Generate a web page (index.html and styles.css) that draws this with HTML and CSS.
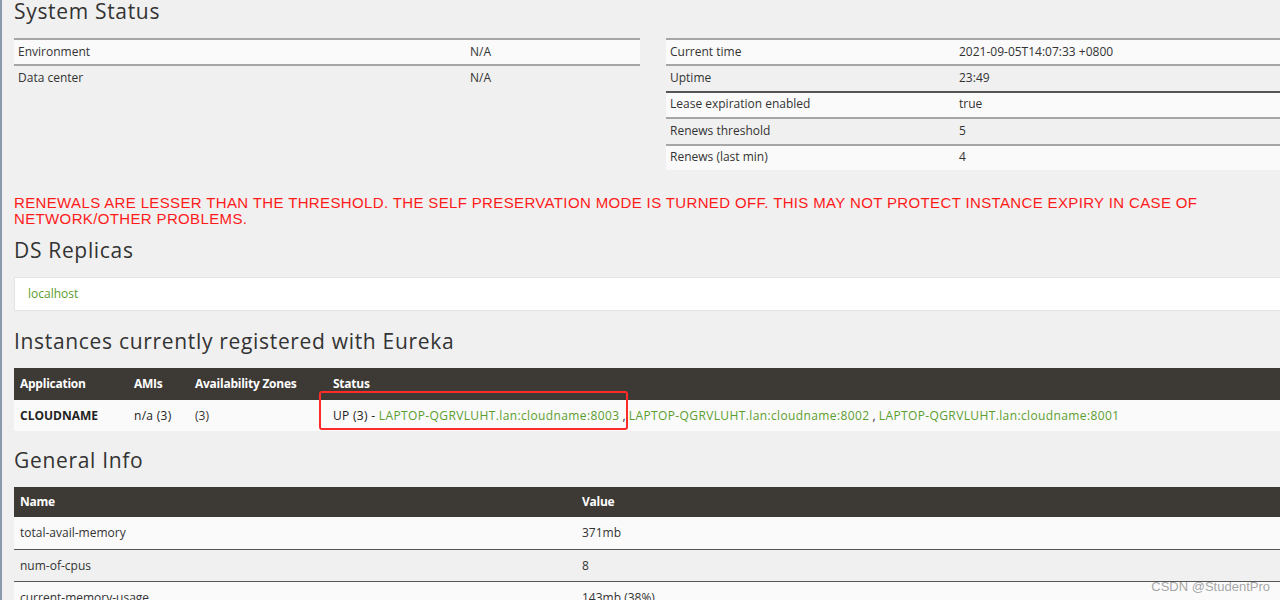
FILE: index.html
```html
<!DOCTYPE html>
<html>
<head>
<meta charset="utf-8">
<link rel="stylesheet" href="styles.css">
</head>
<body>
<div class="page">
  <h2 class="h first">System Status</h2>
  <div class="status-row">
    <table class="kv kv-left">
      <tr class="odd"><td class="k">Environment</td><td>N/A</td></tr>
      <tr class="even"><td class="k">Data center</td><td>N/A</td></tr>
    </table>
    <table class="kv kv-right">
      <tr class="odd"><td class="k">Current time</td><td>2021-09-05T14:07:33 +0800</td></tr>
      <tr class="even"><td class="k">Uptime</td><td>23:49</td></tr>
      <tr class="odd dark"><td class="k">Lease expiration enabled</td><td>true</td></tr>
      <tr class="even"><td class="k">Renews threshold</td><td>5</td></tr>
      <tr class="odd"><td class="k">Renews (last min)</td><td>4</td></tr>
    </table>
  </div>
  <p class="warn">RENEWALS ARE LESSER THAN THE THRESHOLD. THE SELF PRESERVATION MODE IS TURNED OFF. THIS MAY NOT PROTECT INSTANCE EXPIRY IN CASE OF NETWORK/OTHER PROBLEMS.</p>
  <h2 class="h h-ds">DS Replicas</h2>
  <div class="replicas"><a class="lnk">localhost</a></div>
  <h2 class="h h-inst">Instances currently registered with Eureka</h2>
  <div class="inst-wrap">
    <table class="grid inst">
      <tr class="head"><th class="c1">Application</th><th class="c2">AMIs</th><th class="c3">Availability Zones</th><th>Status</th></tr>
      <tr class="odd"><td class="b">CLOUDNAME</td><td class="m">n/a (3)</td><td>(3)</td><td><span class="m">UP (3) - </span><a class="lnk wide">LAPTOP-QGRVLUHT.lan:cloudname:8003</a> , <a class="lnk wide">LAPTOP-QGRVLUHT.lan:cloudname:8002</a> , <a class="lnk wide">LAPTOP-QGRVLUHT.lan:cloudname:8001</a></td></tr>
    </table>
    <div class="annot"></div>
  </div>
  <h2 class="h h-gen">General Info</h2>
  <table class="grid gen">
    <tr class="head"><th class="g1">Name</th><th>Value</th></tr>
    <tr class="odd"><td>total-avail-memory</td><td>371mb</td></tr>
    <tr class="even"><td>num-of-cpus</td><td>8</td></tr>
    <tr class="odd"><td>current-memory-usage</td><td>143mb (38%)</td></tr>
  </table>
</div>
<div class="watermark">CSDN @StudentPro</div>
</body>
</html>
```

FILE: styles.css
```css
html, body {
  margin: 0;
  padding: 0;
  overflow: hidden;
  height: 600px;
}
body {
  background: #f0f0f0;
  font-family: "Open Sans", "Liberation Sans", sans-serif;
  font-size: 12px;
  color: #333;
  border-left: 2px solid #8a9aac;
  position: relative;
}
.page {
  width: 1278px;
  padding-left: 12px;
}
.h {
  font-family: "Open Sans", "Liberation Sans", sans-serif;
  font-weight: 500;
  font-size: 21px;
  letter-spacing: 0.68px;
  color: #333;
  margin: 0;
  line-height: 24px;
  padding: 0 0 15px;
}
.h.first {
  padding-bottom: 14px;
  margin-top: -1px;
}
.h-ds { padding-top: 11px; }
.h-inst { padding-top: 18px; }
.h-gen { padding-top: 17px; }
.status-row {
  display: flex;
  gap: 26px;
  align-items: flex-start;
  margin-top: 1px;
}
table {
  border-collapse: collapse;
  border-spacing: 0;
}
.kv {
  width: 626px;
}
.kv td {
  height: 22.4px;
  padding: 0 4px 2px;
  border-top: 2px solid #a6a6a6;
  vertical-align: middle;
}
.kv-left .k { width: 444px; }
.kv-right .k { width: 281px; }
.odd { background: #fafafa; }
.even { background: #f0f0f0; }
.kv .dark td { border-top-color: #555; }
.warn {
  margin: 0;
  padding-top: 25px;
  color: #ff1a1a;
  font-family: "Liberation Sans", sans-serif;
  font-size: 15px;
  line-height: 16px;
  letter-spacing: 0.36px;
  width: 1250px;
}
.replicas {
  background: #fff;
  border: 1px solid #e4e4e4;
  height: 32px;
  display: flex;
  align-items: center;
  padding-left: 13px;
}
.lnk {
  color: #5a9e2f;
  text-decoration: none;
}
.lnk.wide {
  letter-spacing: 0.38px;
}
.inst-wrap {
  position: relative;
}
.grid {
  width: 1278px;
}
.grid th {
  background: #3d3935;
  color: #fff;
  font-weight: 700;
  text-align: left;
  padding: 0 6px;
  height: 32px;
  letter-spacing: -0.25px;
}
.grid td {
  padding: 0 6px;
  height: 31px;
}
.inst .c1 { width: 102px; }
.inst .c2 { width: 49px; }
.inst .c3 { width: 126px; }
.b { font-weight: 700; color: #222; }
.m { color: #222; letter-spacing: 0.3px; }
.gen th { height: 30px; }
.gen td { height: 31px; border-top: 1px solid #555; }
.gen tr:nth-child(2) td { border-top: none; height: 32px; }
.gen .g1 { width: 550px; }
.annot {
  position: absolute;
  left: 305px;
  top: 23px;
  width: 305px;
  height: 35px;
  border: 2px solid #ff2a2a;
  border-radius: 3px;
}
.watermark {
  position: absolute;
  right: 10px;
  top: 579px;
  font-family: "Liberation Sans", sans-serif;
  font-size: 13px;
  color: rgba(150, 150, 150, 0.85);
}
```
